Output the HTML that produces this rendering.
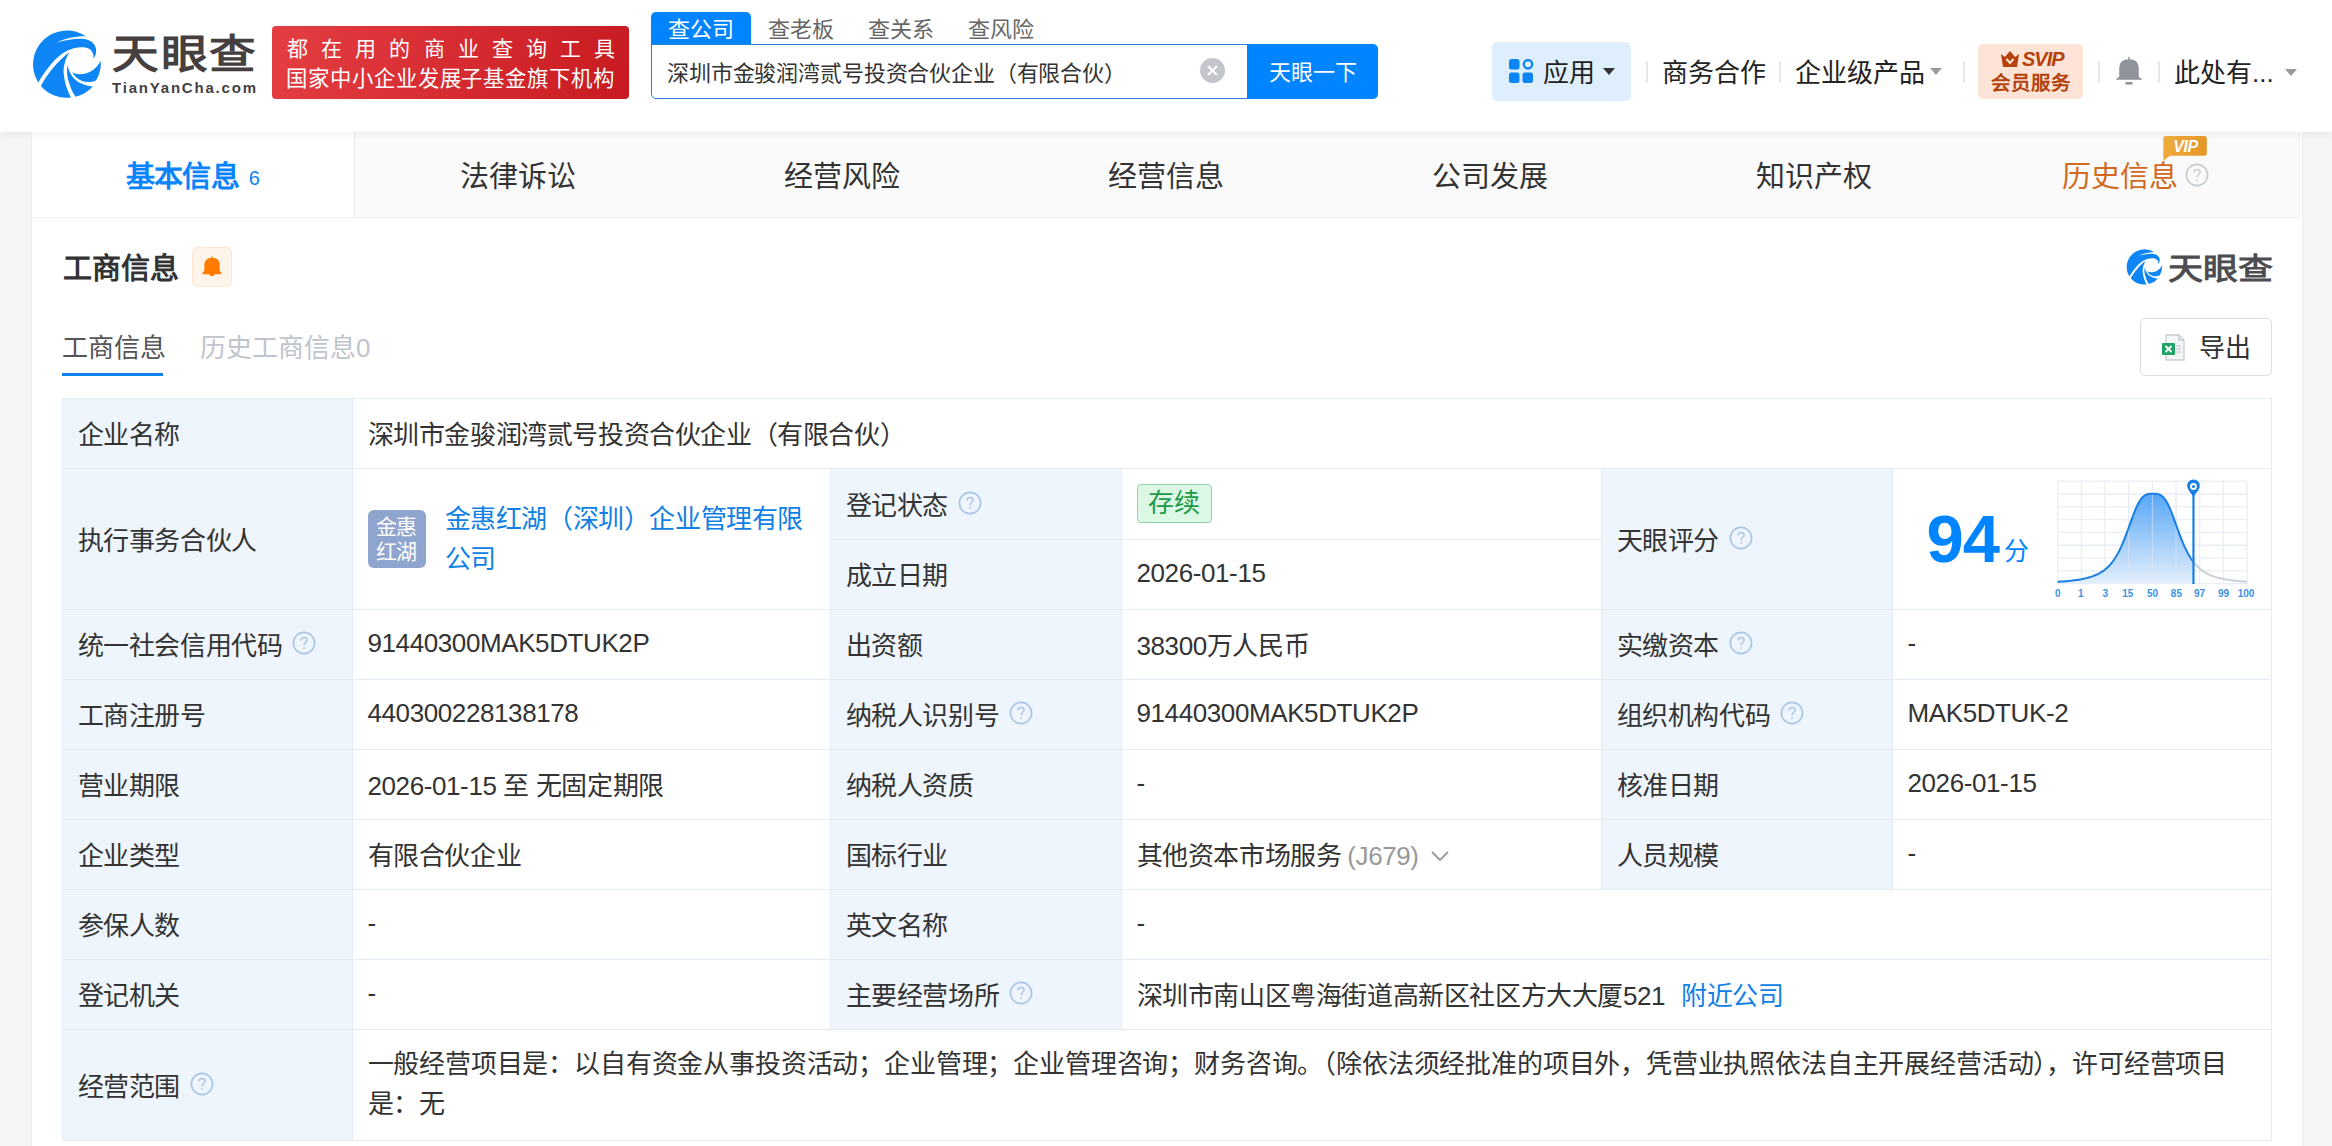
<!DOCTYPE html>
<html lang="zh-CN"><head><meta charset="utf-8">
<style>
*{box-sizing:border-box;margin:0;padding:0}
html,body{width:2332px;height:1146px;overflow:hidden}
body{background:#f5f5f5;font-family:"Liberation Sans",sans-serif;color:#333;position:relative}
.abs{position:absolute}
.nw{white-space:nowrap}
/* header */
#hdr{position:absolute;left:0;top:0;width:2332px;height:132px;background:#fff;box-shadow:0 2px 8px rgba(0,0,0,0.06);z-index:2}
#card{position:absolute;left:32px;top:132px;width:2270px;height:1100px;background:#fff;box-shadow:0 0 4px rgba(0,0,0,0.06)}
.tabs{position:absolute;left:0;top:0;width:2268px;height:86px;background:#fafafa;border-bottom:1px solid #efefef;border-right:1px solid #efefef}
.tab{position:absolute;top:0;height:85px;width:324px;text-align:center;font-size:29px;line-height:90px;color:#333}
.tab.act{background:#fff;border-right:1px solid #ececec;color:#0a84fa;font-weight:700}
table{border-collapse:collapse;table-layout:fixed;position:absolute;left:30px;top:266px}
td{border:1px solid #e4ebf2;font-size:26px;letter-spacing:-0.4px;color:#333;padding:0 0 2px 14.5px;vertical-align:middle;height:70px;white-space:nowrap}
td.l{background:#eef5fd}
.q{display:inline-block;vertical-align:middle;margin:-8px 0 -8px 10px;position:relative;top:-5px}
.link{color:#0f80e6}
</style></head><body>
<div id="hdr">
  <!-- logo -->
  <svg class="abs" style="left:28px;top:26px" width="78" height="78" viewBox="0 0 78 78">
    <path fill="#0e86f6" d="M10.2,56.5 C20,40 32,26 44.2,22.8 C52,20.5 61,20.5 64,25.5 C65.5,28 65.8,30.5 65.4,32.7 C68,30 69.5,24 66.5,19 C63,13 55,12 45,13.2 C38,14 32,15.5 28.6,16.7 C36,12.5 47,10 57.9,10.2 A34,34 0 0 0 10.2,56.5 Z"/>
    <path fill="#0e86f6" d="M12.9,59.9 C18,50 30,34 41.5,26.2 C37,33 35,42 35.7,47.7 C36.5,56 39,64 42.9,71.5 A34,34 0 0 1 12.9,59.9 Z"/>
    <path fill="#0e86f6" d="M39.5,38.8 C38.5,45 39,52 41.5,57.9 C43,63 45,67 47.7,70.8 A34,34 0 0 0 64.7,60.5 C58,59.5 54,58 51,56.5 C45,53 41,47 39.5,38.8 Z"/>
    <path fill="#0e86f6" d="M44.2,46.3 C50,49.5 58,48.5 64.7,44.2 C68,42 71,38 72.8,34.7 A34,34 0 0 1 68,54.5 C63,56.5 58,56.5 54,55 C50,53.5 46.5,50.5 44.2,46.3 Z"/>
  </svg>
  <div class="abs nw" style="left:112px;top:31.4px;font-size:46px;line-height:54px;font-weight:700;color:#453f3f;letter-spacing:2px;transform-origin:0 0;transform:scale(1.014,0.867)">天眼查</div>
  <div class="abs nw" style="left:112px;top:79px;font-size:15px;line-height:18px;font-weight:700;color:#453f3f;letter-spacing:1.8px">TianYanCha.com</div>
  <!-- red badge -->
  <div class="abs" style="left:272px;top:26px;width:357px;height:73px;border-radius:4px;background:linear-gradient(100deg,#e43e42,#c81b21)"></div>
  <div class="abs nw" style="left:287px;top:34px;font-size:21px;line-height:29px;color:#fff;letter-spacing:13.15px">都在用的商业查询工具</div>
  <div class="abs nw" style="left:286px;top:64.5px;font-size:21.4px;line-height:29px;color:#fff;letter-spacing:0.93px">国家中小企业发展子基金旗下机构</div>
  <!-- search -->
  <div class="abs" style="left:651px;top:12px;width:100px;height:33px;background:#0084ff;border-radius:5px 5px 0 0"></div>
  <div class="abs nw" style="left:668px;top:13px;font-size:22px;line-height:33px;color:#fff">查公司</div>
  <div class="abs nw" style="left:768px;top:13px;font-size:22px;line-height:33px;color:#666">查老板</div>
  <div class="abs nw" style="left:868px;top:13px;font-size:22px;line-height:33px;color:#666">查关系</div>
  <div class="abs nw" style="left:968px;top:13px;font-size:22px;line-height:33px;color:#666">查风险</div>
  <div class="abs" style="left:651px;top:44px;width:600px;height:55px;border:1.5px solid #2a80d8;border-radius:0 0 0 5px;background:#fff"></div>
  <div class="abs nw" style="left:667px;top:45.5px;font-size:22px;line-height:55px;color:#333;letter-spacing:-0.15px">深圳市金骏润湾贰号投资合伙企业（有限合伙）</div>
  <svg class="abs" style="left:1200px;top:58px" width="25" height="25" viewBox="0 0 25 25"><circle cx="12.5" cy="12.5" r="12.5" fill="#c3c6cc"/><path d="M8 8 L17 17 M17 8 L8 17" stroke="#fff" stroke-width="2.2"/></svg>
  <div class="abs" style="left:1247px;top:44px;width:131px;height:55px;background:#0084ff;border-radius:0 5px 5px 0"></div>
  <div class="abs nw" style="left:1269px;top:45px;font-size:22px;line-height:55px;color:#fff">天眼一下</div>
  <!-- right nav -->
  <div class="abs" style="left:1492px;top:42px;width:139px;height:59px;background:#dfeefc;border-radius:5px"></div>
  <svg class="abs" style="left:1509px;top:59px" width="25" height="25" viewBox="0 0 25 25">
    <rect x="0" y="0" width="10.5" height="10.5" rx="2.5" fill="#0b84f5"/>
    <circle cx="19" cy="5.3" r="4.2" stroke="#0b84f5" stroke-width="2.3" fill="none"/>
    <rect x="0" y="13.5" width="10.5" height="10.5" rx="2.5" fill="#0b84f5"/>
    <rect x="13.5" y="13.5" width="10.5" height="10.5" rx="2.5" fill="#0b84f5"/>
  </svg>
  <div class="abs nw" style="left:1543px;top:44px;font-size:26px;line-height:59px;color:#222;font-weight:500">应用</div>
  <svg class="abs" style="left:1603px;top:68px" width="12" height="8"><path d="M0 0 L12 0 L6 7 Z" fill="#333"/></svg>
  <div class="abs" style="left:1646px;top:61px;width:1.5px;height:22px;background:#e6e8ec"></div>
  <div class="abs nw" style="left:1662px;top:43.5px;font-size:26px;line-height:59px;color:#222">商务合作</div>
  <div class="abs" style="left:1779px;top:61px;width:1.5px;height:22px;background:#e6e8ec"></div>
  <div class="abs nw" style="left:1795px;top:43.5px;font-size:26px;line-height:59px;color:#222">企业级产品</div>
  <svg class="abs" style="left:1930px;top:68px" width="12" height="8"><path d="M0 0 L12 0 L6 7 Z" fill="#9a9a9a"/></svg>
  <div class="abs" style="left:1963px;top:61px;width:1.5px;height:22px;background:#e6e8ec"></div>
  <div class="abs" style="left:1978px;top:44px;width:105px;height:55px;background:#fde4d7;border-radius:5px"></div>
  <svg class="abs" style="left:2000px;top:50px" width="20" height="18" viewBox="0 0 20 18"><path d="M1 4 L5 7 L10 1 L15 7 L19 4 L17 17 L3 17 Z" fill="#b3420c"/><path d="M6.5 9 L10 13 L13.5 9" stroke="#fde4d7" stroke-width="2" fill="none"/></svg>
  <div class="abs nw" style="left:2022px;top:48px;font-size:20px;line-height:22px;color:#b3420c;font-weight:700;font-style:italic;letter-spacing:-1px">SVIP</div>
  <div class="abs nw" style="left:1991px;top:70px;font-size:19.5px;line-height:26px;color:#b3420c;font-weight:700">会员服务</div>
  <div class="abs" style="left:2098px;top:61px;width:1.5px;height:22px;background:#e6e8ec"></div>
  <svg class="abs" style="left:2116px;top:56px" width="26" height="30" viewBox="0 0 26 30"><path d="M13 1 L13 4 M4 21 L4 12 C4 6 8 4 13 4 C18 4 22 6 22 12 L22 21 L24.5 23 L1.5 23 Z" fill="#8f939a" stroke="#8f939a" stroke-width="1.5"/><rect x="9.5" y="26" width="7" height="2.5" fill="#8f939a"/></svg>
  <div class="abs" style="left:2158px;top:61px;width:1.5px;height:22px;background:#e6e8ec"></div>
  <div class="abs nw" style="left:2174px;top:43.5px;font-size:26px;line-height:59px;color:#222">此处有...</div>
  <svg class="abs" style="left:2285px;top:69px" width="12" height="8"><path d="M0 0 L12 0 L6 7 Z" fill="#9a9a9a"/></svg>
</div>

<div id="card">
  <div class="tabs">
    <div class="tab act" style="left:0;width:323px"><span style="letter-spacing:-0.8px">基本信息</span><span style="font-size:20px;font-weight:400;margin-left:10px;position:relative;top:-2px">6</span></div>
    <div class="tab" style="left:324px">法律诉讼</div>
    <div class="tab" style="left:648px">经营风险</div>
    <div class="tab" style="left:972px">经营信息</div>
    <div class="tab" style="left:1296px">公司发展</div>
    <div class="tab" style="left:1620px">知识产权</div>
    <div class="tab" style="left:1944px;color:#d2691f;text-indent:-5px">历史信息<svg class="q" style="margin-left:7px;top:-4.5px" width="24" height="24" viewBox="0 0 24 24"><circle cx="12" cy="12" r="10.6" fill="none" stroke="#c6cbd2" stroke-width="1.7"/><path d="M9.1 9.4 C9.1 7.5 10.4 6.4 12.1 6.4 C13.9 6.4 15.1 7.6 15.1 9.1 C15.1 10.5 14.2 11.1 13.2 11.8 C12.4 12.4 12.1 12.9 12.1 14.2" fill="none" stroke="#c6cbd2" stroke-width="1.5"/><circle cx="12.1" cy="17.1" r="0.95" fill="#c6cbd2"/></svg></div>
  </div>

  <!-- section title -->
  <div class="abs nw" style="left:31px;top:115px;font-size:29px;line-height:44px;font-weight:700;color:#333">工商信息</div>
  <div class="abs" style="left:160px;top:115px;width:40px;height:40px;background:#fff4ea;border:1px solid #fde5d2;border-radius:5px"></div>
  <svg class="abs" style="left:170px;top:124px" width="20" height="22" viewBox="0 0 20 22"><path d="M10 0.5 L10 2.5 M3 15 L3 9 C3 4.5 6 2.5 10 2.5 C14 2.5 17 4.5 17 9 L17 15 L19 17.5 L1 17.5 Z" fill="#ff7b00" stroke="#ff7b00" stroke-width="1.4" stroke-linejoin="round"/><path d="M7.5 18 C7.5 21 12.5 21 12.5 18 Z" fill="#ff7b00"/></svg>
  <!-- small logo -->
  <svg class="abs" style="left:2092.08px;top:115.34px" width="40.84" height="40.84" viewBox="0 0 78 78">
    <path fill="#0e86f6" d="M10.2,56.5 C20,40 32,26 44.2,22.8 C52,20.5 61,20.5 64,25.5 C65.5,28 65.8,30.5 65.4,32.7 C68,30 69.5,24 66.5,19 C63,13 55,12 45,13.2 C38,14 32,15.5 28.6,16.7 C36,12.5 47,10 57.9,10.2 A34,34 0 0 0 10.2,56.5 Z"/>
    <path fill="#0e86f6" d="M12.9,59.9 C18,50 30,34 41.5,26.2 C37,33 35,42 35.7,47.7 C36.5,56 39,64 42.9,71.5 A34,34 0 0 1 12.9,59.9 Z"/>
    <path fill="#0e86f6" d="M39.5,38.8 C38.5,45 39,52 41.5,57.9 C43,63 45,67 47.7,70.8 A34,34 0 0 0 64.7,60.5 C58,59.5 54,58 51,56.5 C45,53 41,47 39.5,38.8 Z"/>
    <path fill="#0e86f6" d="M44.2,46.3 C50,49.5 58,48.5 64.7,44.2 C68,42 71,38 72.8,34.7 A34,34 0 0 1 68,54.5 C63,56.5 58,56.5 54,55 C50,53.5 46.5,50.5 44.2,46.3 Z"/>
  </svg>
  <div class="abs nw" style="left:2136px;top:118.3px;font-size:34px;line-height:44px;font-weight:700;color:#4d4c50;letter-spacing:0px;transform-origin:0 0;transform:scale(1.028,0.858)">天眼查</div>
  <!-- sub tabs -->
  <div class="abs nw" style="left:30px;top:195.5px;font-size:26px;line-height:40px;color:#555;font-weight:500">工商信息</div>
  <div class="abs" style="left:30px;top:241px;width:101px;height:3px;background:#0f84f0"></div>
  <div class="abs nw" style="left:168px;top:195.5px;font-size:26px;line-height:40px;color:#c0c4cc">历史工商信息0</div>
  <!-- export -->
  <div class="abs" style="left:2108px;top:186px;width:132px;height:58px;border:1px solid #dcdfe6;border-radius:5px;background:#fff"></div>
  <svg class="abs" style="left:2130px;top:202px" width="26" height="28" viewBox="0 0 26 28">
    <path d="M4 1 L17 1 L22 6 L22 26 L4 26 Z" fill="#f4f5f7" stroke="#c9ccd1" stroke-width="1.3"/>
    <path d="M17 1 L17 6 L22 6" fill="none" stroke="#c9ccd1" stroke-width="1.3"/>
    <path d="M14 12 L19 12 M14 15 L19 15 M14 18 L19 18" stroke="#c0c3c8" stroke-width="1.2"/>
    <rect x="0" y="9" width="13" height="12" rx="1" fill="#21a366"/>
    <path d="M3.5 12 L9.5 18 M9.5 12 L3.5 18" stroke="#fff" stroke-width="1.8"/>
  </svg>
  <div class="abs nw" style="left:2167px;top:196px;font-size:26px;line-height:40px;color:#333">导出</div>

  <table style="width:2209px">
    <colgroup><col style="width:290px"><col style="width:478px"><col style="width:291px"><col style="width:480px"><col style="width:291px"><col style="width:379px"></colgroup>
    <tr style="height:70px"><td class="l">企业名称</td><td colspan="5">深圳市金骏润湾贰号投资合伙企业（有限合伙）</td></tr>
    <tr style="height:71px"><td class="l" rowspan="2">执行事务合伙人</td>
      <td rowspan="2"><div style="position:relative;height:138px">
        <div class="abs" style="left:0;top:41px;width:58px;height:58px;border-radius:6px;background:#8fa5cd;color:#fff;font-size:21px;line-height:25px;text-align:center;padding-top:4px;white-space:normal">金惠<br>红湖</div>
        <div class="abs link" style="left:77px;top:30px;font-size:26px;line-height:40px;white-space:nowrap">金惠红湖（深圳）企业管理有限<br>公司</div>
      </div></td>
      <td class="l">登记状态<svg class="q" width="24" height="24" viewBox="0 0 24 24"><circle cx="12" cy="12" r="10.6" fill="none" stroke="#a9c6e6" stroke-width="1.7"/><path d="M9.1 9.4 C9.1 7.5 10.4 6.4 12.1 6.4 C13.9 6.4 15.1 7.6 15.1 9.1 C15.1 10.5 14.2 11.1 13.2 11.8 C12.4 12.4 12.1 12.9 12.1 14.2" fill="none" stroke="#a9c6e6" stroke-width="1.5"/><circle cx="12.1" cy="17.1" r="0.95" fill="#a9c6e6"/></svg></td>
      <td><span style="display:inline-block;width:75px;height:39px;border:1px solid #8fd4a5;background:#dcf8e5;border-radius:4px;color:#1e9a48;font-size:26px;line-height:37px;text-align:center">存续</span></td>
      <td class="l" rowspan="2">天眼评分<svg class="q" width="24" height="24" viewBox="0 0 24 24"><circle cx="12" cy="12" r="10.6" fill="none" stroke="#a9c6e6" stroke-width="1.7"/><path d="M9.1 9.4 C9.1 7.5 10.4 6.4 12.1 6.4 C13.9 6.4 15.1 7.6 15.1 9.1 C15.1 10.5 14.2 11.1 13.2 11.8 C12.4 12.4 12.1 12.9 12.1 14.2" fill="none" stroke="#a9c6e6" stroke-width="1.5"/><circle cx="12.1" cy="17.1" r="0.95" fill="#a9c6e6"/></svg></td>
      <td rowspan="2" style="padding:0"></td>
    </tr>
    <tr style="height:70px"><td class="l">成立日期</td><td>2026-01-15</td></tr>
    <tr style="height:70px"><td class="l">统一社会信用代码<svg class="q" width="24" height="24" viewBox="0 0 24 24"><circle cx="12" cy="12" r="10.6" fill="none" stroke="#a9c6e6" stroke-width="1.7"/><path d="M9.1 9.4 C9.1 7.5 10.4 6.4 12.1 6.4 C13.9 6.4 15.1 7.6 15.1 9.1 C15.1 10.5 14.2 11.1 13.2 11.8 C12.4 12.4 12.1 12.9 12.1 14.2" fill="none" stroke="#a9c6e6" stroke-width="1.5"/><circle cx="12.1" cy="17.1" r="0.95" fill="#a9c6e6"/></svg></td><td>91440300MAK5DTUK2P</td><td class="l">出资额</td><td>38300万人民币</td><td class="l">实缴资本<svg class="q" width="24" height="24" viewBox="0 0 24 24"><circle cx="12" cy="12" r="10.6" fill="none" stroke="#a9c6e6" stroke-width="1.7"/><path d="M9.1 9.4 C9.1 7.5 10.4 6.4 12.1 6.4 C13.9 6.4 15.1 7.6 15.1 9.1 C15.1 10.5 14.2 11.1 13.2 11.8 C12.4 12.4 12.1 12.9 12.1 14.2" fill="none" stroke="#a9c6e6" stroke-width="1.5"/><circle cx="12.1" cy="17.1" r="0.95" fill="#a9c6e6"/></svg></td><td>-</td></tr>
    <tr style="height:70px"><td class="l">工商注册号</td><td>440300228138178</td><td class="l">纳税人识别号<svg class="q" width="24" height="24" viewBox="0 0 24 24"><circle cx="12" cy="12" r="10.6" fill="none" stroke="#a9c6e6" stroke-width="1.7"/><path d="M9.1 9.4 C9.1 7.5 10.4 6.4 12.1 6.4 C13.9 6.4 15.1 7.6 15.1 9.1 C15.1 10.5 14.2 11.1 13.2 11.8 C12.4 12.4 12.1 12.9 12.1 14.2" fill="none" stroke="#a9c6e6" stroke-width="1.5"/><circle cx="12.1" cy="17.1" r="0.95" fill="#a9c6e6"/></svg></td><td>91440300MAK5DTUK2P</td><td class="l">组织机构代码<svg class="q" width="24" height="24" viewBox="0 0 24 24"><circle cx="12" cy="12" r="10.6" fill="none" stroke="#a9c6e6" stroke-width="1.7"/><path d="M9.1 9.4 C9.1 7.5 10.4 6.4 12.1 6.4 C13.9 6.4 15.1 7.6 15.1 9.1 C15.1 10.5 14.2 11.1 13.2 11.8 C12.4 12.4 12.1 12.9 12.1 14.2" fill="none" stroke="#a9c6e6" stroke-width="1.5"/><circle cx="12.1" cy="17.1" r="0.95" fill="#a9c6e6"/></svg></td><td>MAK5DTUK-2</td></tr>
    <tr style="height:70px"><td class="l">营业期限</td><td>2026-01-15 至 无固定期限</td><td class="l">纳税人资质</td><td>-</td><td class="l">核准日期</td><td>2026-01-15</td></tr>
    <tr style="height:70px"><td class="l">企业类型</td><td>有限合伙企业</td><td class="l">国标行业</td><td>其他资本市场服务<span style="color:#999;margin-left:6px">(J679)</span><svg style="margin-left:12px;vertical-align:middle;position:relative;top:-2px" width="18" height="10" viewBox="0 0 18 10"><path d="M1 1 L9 9 L17 1" stroke="#999" stroke-width="1.8" fill="none"/></svg></td><td class="l">人员规模</td><td>-</td></tr>
    <tr style="height:70px"><td class="l">参保人数</td><td>-</td><td class="l">英文名称</td><td colspan="3">-</td></tr>
    <tr style="height:70px"><td class="l">登记机关</td><td>-</td><td class="l">主要经营场所<svg class="q" width="24" height="24" viewBox="0 0 24 24"><circle cx="12" cy="12" r="10.6" fill="none" stroke="#a9c6e6" stroke-width="1.7"/><path d="M9.1 9.4 C9.1 7.5 10.4 6.4 12.1 6.4 C13.9 6.4 15.1 7.6 15.1 9.1 C15.1 10.5 14.2 11.1 13.2 11.8 C12.4 12.4 12.1 12.9 12.1 14.2" fill="none" stroke="#a9c6e6" stroke-width="1.5"/><circle cx="12.1" cy="17.1" r="0.95" fill="#a9c6e6"/></svg></td><td colspan="3">深圳市南山区粤海街道高新区社区方大大厦521<span class="link" style="margin-left:16px">附近公司</span></td></tr>
    <tr style="height:111px"><td class="l">经营范围<svg class="q" width="24" height="24" viewBox="0 0 24 24"><circle cx="12" cy="12" r="10.6" fill="none" stroke="#a9c6e6" stroke-width="1.7"/><path d="M9.1 9.4 C9.1 7.5 10.4 6.4 12.1 6.4 C13.9 6.4 15.1 7.6 15.1 9.1 C15.1 10.5 14.2 11.1 13.2 11.8 C12.4 12.4 12.1 12.9 12.1 14.2" fill="none" stroke="#a9c6e6" stroke-width="1.5"/><circle cx="12.1" cy="17.1" r="0.95" fill="#a9c6e6"/></svg></td><td colspan="5" style="line-height:40px;letter-spacing:-0.17px">一般经营项目是：以自有资金从事投资活动；企业管理；企业管理咨询；财务咨询。（除依法须经批准的项目外，凭营业执照依法自主开展经营活动），许可经营项目<br>是：无</td></tr>
  </table>

</div>

<svg class="abs" style="left:2040px;top:470px;z-index:3" width="225" height="135" viewBox="0 0 225 135">
  <defs><linearGradient id="gf" x1="0" y1="0" x2="0" y2="1"><stop offset="0" stop-color="#4ea3f7"/><stop offset="1" stop-color="#e3eefb"/></linearGradient></defs>
  <g stroke="#e9eef5" stroke-width="1.3"><line x1="17.66" y1="11.2" x2="17.66" y2="113.7"/><line x1="41.34" y1="11.2" x2="41.34" y2="113.7"/><line x1="65.01" y1="11.2" x2="65.01" y2="113.7"/><line x1="88.69" y1="11.2" x2="88.69" y2="113.7"/><line x1="112.36" y1="11.2" x2="112.36" y2="113.7"/><line x1="136.03" y1="11.2" x2="136.03" y2="113.7"/><line x1="159.71" y1="11.2" x2="159.71" y2="113.7"/><line x1="183.38" y1="11.2" x2="183.38" y2="113.7"/><line x1="207.06" y1="11.2" x2="207.06" y2="113.7"/><line x1="17.66" y1="11.20" x2="207.06" y2="11.20"/><line x1="17.66" y1="24.01" x2="207.06" y2="24.01"/><line x1="17.66" y1="36.82" x2="207.06" y2="36.82"/><line x1="17.66" y1="49.63" x2="207.06" y2="49.63"/><line x1="17.66" y1="62.44" x2="207.06" y2="62.44"/><line x1="17.66" y1="75.25" x2="207.06" y2="75.25"/><line x1="17.66" y1="88.06" x2="207.06" y2="88.06"/><line x1="17.66" y1="100.87" x2="207.06" y2="100.87"/><line x1="17.66" y1="113.68" x2="207.06" y2="113.68"/></g>
  <path d="M17.66,111.79 L17.66,111.79 19.17,111.70 20.68,111.60 22.19,111.49 23.70,111.38 25.20,111.26 26.71,111.13 28.22,110.99 29.73,110.84 31.24,110.67 32.75,110.50 34.26,110.31 35.77,110.11 37.28,109.89 38.78,109.66 40.29,109.40 41.80,109.12 43.31,108.82 44.82,108.50 46.33,108.14 47.84,107.75 49.35,107.33 50.86,106.86 52.36,106.36 53.87,105.80 55.38,105.19 56.89,104.52 58.40,103.78 59.91,102.96 61.42,102.07 62.93,101.07 64.44,99.98 65.94,98.77 67.45,97.43 68.96,95.95 70.47,94.31 71.98,92.49 73.49,90.49 75.00,88.28 76.51,85.85 78.02,83.19 79.52,80.28 81.03,77.13 82.54,73.72 84.05,70.08 85.56,66.22 87.07,62.19 88.58,58.03 90.09,53.80 91.60,49.60 93.10,45.50 94.61,41.60 96.12,37.99 97.63,34.75 99.14,31.93 100.65,29.57 102.16,27.67 103.67,26.23 105.18,25.19 106.68,24.50 108.19,24.09 109.70,23.88 111.21,23.81 112.72,23.80 114.23,23.81 115.74,23.86 117.25,24.02 118.76,24.38 120.26,24.99 121.77,25.94 123.28,27.29 124.79,29.07 126.30,31.32 127.81,34.03 129.32,37.18 130.83,40.71 132.34,44.55 133.84,48.61 135.35,52.79 136.86,57.02 138.37,61.20 139.88,65.28 141.39,69.18 142.90,72.87 144.41,76.34 145.92,79.55 147.42,82.52 148.93,85.24 150.44,87.72 151.95,89.98 153.46,92.03 L153.46,113.66 L17.66,113.66 Z" fill="url(#gf)" opacity="0.95"/>
  <g stroke="#e3ebf5" stroke-width="1" opacity="0.6"><line x1="88.69" y1="24" x2="88.69" y2="113.7"/><line x1="112.36" y1="24" x2="112.36" y2="113.7"/><line x1="136.03" y1="24" x2="136.03" y2="113.7"/></g>
  <polyline points="17.66,111.79 19.17,111.70 20.68,111.60 22.19,111.49 23.70,111.38 25.20,111.26 26.71,111.13 28.22,110.99 29.73,110.84 31.24,110.67 32.75,110.50 34.26,110.31 35.77,110.11 37.28,109.89 38.78,109.66 40.29,109.40 41.80,109.12 43.31,108.82 44.82,108.50 46.33,108.14 47.84,107.75 49.35,107.33 50.86,106.86 52.36,106.36 53.87,105.80 55.38,105.19 56.89,104.52 58.40,103.78 59.91,102.96 61.42,102.07 62.93,101.07 64.44,99.98 65.94,98.77 67.45,97.43 68.96,95.95 70.47,94.31 71.98,92.49 73.49,90.49 75.00,88.28 76.51,85.85 78.02,83.19 79.52,80.28 81.03,77.13 82.54,73.72 84.05,70.08 85.56,66.22 87.07,62.19 88.58,58.03 90.09,53.80 91.60,49.60 93.10,45.50 94.61,41.60 96.12,37.99 97.63,34.75 99.14,31.93 100.65,29.57 102.16,27.67 103.67,26.23 105.18,25.19 106.68,24.50 108.19,24.09 109.70,23.88 111.21,23.81 112.72,23.80 114.23,23.81 115.74,23.86 117.25,24.02 118.76,24.38 120.26,24.99 121.77,25.94 123.28,27.29 124.79,29.07 126.30,31.32 127.81,34.03 129.32,37.18 130.83,40.71 132.34,44.55 133.84,48.61 135.35,52.79 136.86,57.02 138.37,61.20 139.88,65.28 141.39,69.18 142.90,72.87 144.41,76.34 145.92,79.55 147.42,82.52 148.93,85.24 150.44,87.72 151.95,89.98 153.46,92.03" fill="none" stroke="#1a7fe3" stroke-width="2"/>
  <polyline points="153.46,92.03 154.80,93.69 156.14,95.21 157.48,96.60 158.82,97.86 160.16,99.02 161.50,100.08 162.84,101.05 164.18,101.94 165.52,102.75 166.86,103.50 168.20,104.18 169.54,104.81 170.88,105.38 172.22,105.91 173.56,106.40 174.90,106.85 176.24,107.26 177.58,107.65 178.92,108.00 180.26,108.33 181.60,108.63 182.94,108.92 184.28,109.18 185.62,109.42 186.96,109.65 188.30,109.86 189.64,110.06 190.98,110.24 192.32,110.41 193.66,110.57 195.00,110.72 196.34,110.86 197.68,111.00 199.02,111.12 200.36,111.24 201.70,111.35 203.04,111.45 204.38,111.55 205.72,111.64 207.06,111.72" fill="none" stroke="#c9d0d8" stroke-width="2"/>
  <line x1="153.46" y1="22" x2="153.46" y2="114" stroke="#1a7fe3" stroke-width="2.2"/>
  <path d="M147.2 16.5 A6.3 6.3 0 1 1 159.7 16.5 C159.5 19.5 156 23 153.46 27 C151 23 147.4 19.5 147.2 16.5 Z" fill="#1a7fe3"/>
  <circle cx="153.46" cy="16.5" r="3.4" fill="#fff"/>
  <circle cx="153.46" cy="16.5" r="1.6" fill="#1a7fe3"/>
  <g font-size="10px" font-weight="700" fill="#3d91e6" font-family="Liberation Sans, sans-serif"><text x="17.7" y="127.2" text-anchor="middle">0</text><text x="40.9" y="127.2" text-anchor="middle">1</text><text x="65.4" y="127.2" text-anchor="middle">3</text><text x="87.7" y="127.2" text-anchor="middle">15</text><text x="112.5" y="127.2" text-anchor="middle">50</text><text x="136.4" y="127.2" text-anchor="middle">85</text><text x="159.6" y="127.2" text-anchor="middle">97</text><text x="183.5" y="127.2" text-anchor="middle">99</text><text x="206.0" y="127.2" text-anchor="middle">100</text></g>
</svg>
  <div class="abs nw" style="left:1926.5px;top:498.5px;font-size:67px;line-height:80px;font-weight:700;color:#0084ff;letter-spacing:-1px;z-index:3">94</div>
  <div class="abs nw" style="left:2004px;top:533px;font-size:25px;line-height:36px;color:#0084ff;z-index:3">分</div>

  <svg class="abs" style="left:2162px;top:135px;z-index:3" width="46" height="27" viewBox="0 0 46 27">
    <defs><linearGradient id="vg" x1="0" y1="0" x2="1" y2="0"><stop offset="0" stop-color="#eeab3c"/><stop offset="1" stop-color="#e5982a"/></linearGradient></defs>
    <path d="M1.3 3.5 Q1.3 1 3.8 1 L42.3 1 Q44.8 1 44.8 3.5 L44.8 18.2 Q44.8 20.7 42.3 20.7 L8 20.7 L1.3 25.7 Z" fill="url(#vg)"/>
    <text x="23.5" y="17" text-anchor="middle" font-family="Liberation Sans, sans-serif" font-size="16" font-weight="700" font-style="italic" fill="#fff" letter-spacing="-0.5">VIP</text>
  </svg>
</body></html>
